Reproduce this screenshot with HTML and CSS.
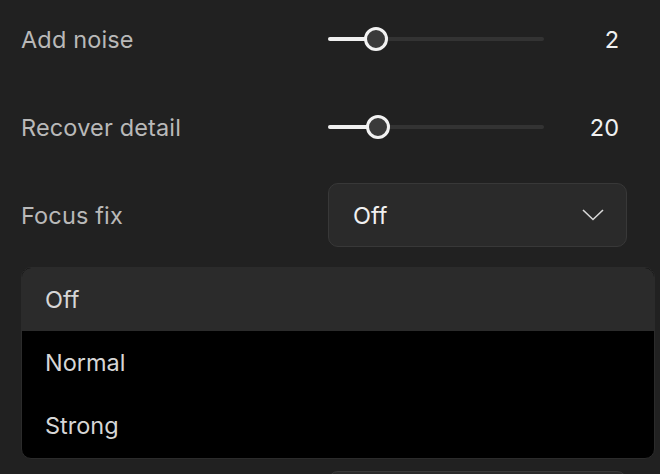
FILE: index.html
```html
<!DOCTYPE html>
<html lang="en">
<head>
<meta charset="utf-8">
<title>Settings</title>
<link rel="stylesheet" href="styles.css">
</head>
<body>
<div class="panel">
  <div class="row">
    <div class="label">Add noise</div>
    <div class="slider">
      <div class="track"></div>
      <div class="fill" style="width:48px"></div>
      <div class="thumb" style="left:36px"></div>
    </div>
    <div class="value">2</div>
  </div>
  <div class="row">
    <div class="label">Recover detail</div>
    <div class="slider">
      <div class="track"></div>
      <div class="fill" style="width:50px"></div>
      <div class="thumb" style="left:38px"></div>
    </div>
    <div class="value">20</div>
  </div>
  <div class="row row-select">
    <div class="label">Focus fix</div>
    <div class="select">
      <span class="select-text">Off</span>
      <svg class="chevron" width="22" height="12" viewBox="0 0 22 12"><path d="M1 1 L11 10.5 L21 1" fill="none" stroke="#d8d8d8" stroke-width="1.6"/></svg>
    </div>
    <ul class="menu">
      <li class="menu-item active">Off</li>
      <li class="menu-item">Normal</li>
      <li class="menu-item">Strong</li>
    </ul>
  </div>
  <div class="row row-select row-next">
    <div class="label"></div>
    <div class="select"></div>
  </div>
</div>
</body>
</html>
```

FILE: styles.css
```css
html, body {
  margin: 0;
  padding: 0;
  background: #212121;
  overflow: hidden;
  height: 474px;
}
body {
  font-family: Inter, "Noto Sans", sans-serif;
}
.panel {
  padding: 7px 0 0 21px;
  display: flex;
  flex-direction: column;
  gap: 24px;
}
.row {
  display: grid;
  grid-template-columns: 307px 216px 75px;
  height: 64px;
  align-items: center;
}
.label {
  font-size: 23.5px;
  color: #b9b9b9;
  letter-spacing: 0.15px;
}
.slider {
  position: relative;
  height: 24px;
}
.track {
  position: absolute;
  left: 0;
  right: 0;
  top: 10px;
  height: 4px;
  border-radius: 2px;
  background: #333333;
}
.fill {
  position: absolute;
  left: 0;
  top: 10px;
  height: 4px;
  border-radius: 2px;
  background: #f0f0f0;
}
.thumb {
  position: absolute;
  top: 0;
  width: 24px;
  height: 24px;
  box-sizing: border-box;
  border-radius: 50%;
  border: 3px solid #f2f2f2;
  background: #3a3a3a;
}
.value {
  text-align: right;
  font-size: 23.5px;
  color: #f0f0f0;
}
.row-select {
  position: relative;
}
.select {
  grid-column: 2 / 4;
  width: 299px;
  height: 64px;
  box-sizing: border-box;
  border: 1px solid #383838;
  border-radius: 10px;
  background: #2a2a2a;
  display: flex;
  align-items: center;
  justify-content: space-between;
  padding: 0 22px 0 24px;
}
.select-text {
  font-size: 23.5px;
  color: #f0f0f0;
}
.chevron {
  display: block;
}
.menu {
  position: absolute;
  left: 0;
  top: 84px;
  width: 634px;
  box-sizing: border-box;
  margin: 0;
  padding: 0;
  list-style: none;
  background: #000;
  border: 1px solid #2b2b2b;
  border-radius: 10px;
  overflow: hidden;
  z-index: 2;
}
.menu-item {
  height: 63.5px;
  display: flex;
  align-items: center;
  padding-left: 23px;
  font-size: 23.5px;
  color: #d6d6d6;
}
.menu-item.active {
  background: #2b2b2b;
  height: 62.5px;
}
.row-next {
  margin-top: 200px;
}
```
